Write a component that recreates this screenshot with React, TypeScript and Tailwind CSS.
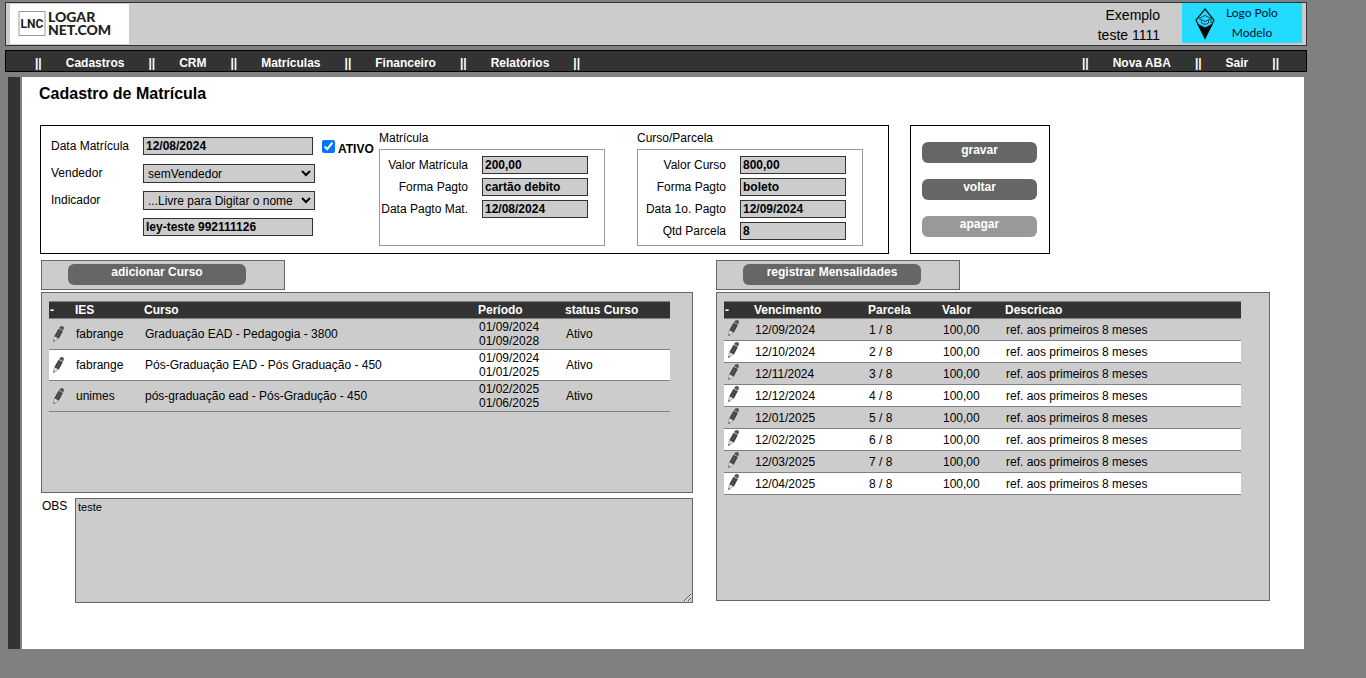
import { Fragment } from "react";

const LEFT_MENU = ["Cadastros", "CRM", "Matrículas", "Financeiro", "Relatórios"];
const RIGHT_MENU = ["Nova ABA", "Sair"];

const CURSOS = [
  {
    ies: "fabrange",
    curso: "Graduação EAD - Pedagogia - 3800",
    inicio: "01/09/2024",
    fim: "01/09/2028",
    status: "Ativo",
  },
  {
    ies: "fabrange",
    curso: "Pós-Graduação EAD - Pós Graduação - 450",
    inicio: "01/09/2024",
    fim: "01/01/2025",
    status: "Ativo",
  },
  {
    ies: "unimes",
    curso: "pós-graduação ead - Pós-Gradução - 450",
    inicio: "01/02/2025",
    fim: "01/06/2025",
    status: "Ativo",
  },
];

const VENCIMENTOS = [
  "12/09/2024",
  "12/10/2024",
  "12/11/2024",
  "12/12/2024",
  "12/01/2025",
  "12/02/2025",
  "12/03/2025",
  "12/04/2025",
];

const INPUT =
  "h-[18px] border border-[#333] bg-[#ccc] px-[2px] font-bold text-black outline-none";
const SELECT =
  "h-[19px] w-[172px] border border-[#333] bg-[#ccc] text-black outline-none";
const TH =
  "h-[18px] border-y border-[#808080] bg-[#333] p-0 pl-px text-left font-bold text-white";
const TD = "border-b border-[#808080] p-0 pl-[2px]";

function Pencil() {
  return (
    <svg width="11" height="16" viewBox="0 0 11 16" aria-hidden="true">
      <path d="M6.4 1.6 7.6.2 9.4 0 10.8 1v1.8L10 4.4 6.1 2.3z" fill="#555" />
      <path d="M5.5 2.7 9.9 5 5.8 12.8 1.2 10.2z" fill="#444" />
      <path d="M7 4.8 3.6 10.8" stroke="#777" strokeWidth=".5" />
      <path
        d="M1.3 10.6.6 15.4 4.9 12.8"
        fill="#e5e5e5"
        stroke="#888"
        strokeWidth=".7"
      />
      <path d="m.3 16 .3-2 1.5.9z" fill="#555" />
    </svg>
  );
}

function SiteLogo() {
  return (
    <svg width="119" height="40" viewBox="0 0 119 40" role="img" aria-label="Logar Net.com">
      <rect width="119" height="40" fill="#fff" />
      <rect x="9" y="7.5" width="26" height="24" fill="#fff" stroke="#999" />
      <text
        x="22"
        y="24"
        textAnchor="middle"
        fontSize="12"
        fontWeight="700"
        fill="#222"
        fontFamily="Roboto, sans-serif"
      >
        LNC
      </text>
      <g fontFamily="Lato, sans-serif" fontWeight="900" fontSize="14" fill="#222">
        <text x="38" y="18">LOGAR</text>
        <text x="38" y="31">NET.COM</text>
      </g>
    </svg>
  );
}

function PoloLogo() {
  return (
    <svg width="120" height="40" viewBox="0 0 120 40" role="img" aria-label="Logo Polo Modelo">
      <rect width="120" height="40" fill="#22dcff" />
      <path d="M23 6 32 17 23 35.5 14 17z" fill="none" stroke="#111" strokeWidth="1.2" />
      <path d="M15 20.5 23 24.5 31 20.5 23 35.5z" fill="#000" />
      <path
        d="M17 15.5 23 12.5 29.5 15.5 23 18.5zM19.5 17v3c2 1.6 5 1.6 7 0v-3M29 16v4"
        fill="none"
        stroke="#134"
        strokeWidth=".9"
      />
      <g fontFamily="Lato, sans-serif" fontSize="12" fill="#013" textAnchor="middle">
        <text x="70" y="14">Logo Polo</text>
        <text x="70" y="34">Modelo</text>
      </g>
    </svg>
  );
}

function Menu({ items }: { items: string[] }) {
  return (
    <div className="flex gap-6">
      <span>||</span>
      {items.map((item) => (
        <Fragment key={item}>
          <a href="#">{item}</a>
          <span>||</span>
        </Fragment>
      ))}
    </div>
  );
}

type Field = { id: string; label: string; value: string };

function PaymentGroup({ title, fields }: { title: string; fields: Field[] }) {
  return (
    <fieldset className="flex min-w-0 flex-col">
      <legend className="pt-1 pb-[3px] leading-4">{title}</legend>
      <div className="grow border border-[#999] pt-[6px] pr-4 pb-px">
        {fields.map((field) => (
          <div key={field.id} className="flex h-[22px] items-start">
            <label
              htmlFor={field.id}
              className="mr-[14px] w-[88px] text-right leading-[18px] whitespace-nowrap"
            >
              {field.label}
            </label>
            <input
              id={field.id}
              className={`${INPUT} w-[106px]`}
              defaultValue={field.value}
            />
          </div>
        ))}
      </div>
    </fieldset>
  );
}

function ToolbarButton({ children }: { children: string }) {
  return (
    <div className="mb-[2px] flex h-[30px] w-[244px] items-start border border-[#666] bg-[#ccc] pt-[3px] pl-[26px]">
      <button className="h-[21px] w-[178px] rounded-md bg-[#666] pb-[5px] leading-4 font-bold text-white">
        {children}
      </button>
    </div>
  );
}

export default function App() {
  return (
    <div className="min-h-screen bg-[#808080] pt-[2px] pr-[59px] pl-[5px] font-['Liberation_Sans',Arial,sans-serif] text-xs text-black">
      <header className="mb-1 flex h-11 items-start border border-[#333] bg-[#ccc] pr-1 pl-1">
        <div className="pt-px">
          <SiteLogo />
        </div>
        <div className="mr-[22px] ml-auto pt-[2px] text-right text-sm leading-5">
          <div>Exemplo</div>
          <div>teste 1111</div>
        </div>
        <PoloLogo />
      </header>

      <nav className="mb-[5px] flex h-[22px] items-center justify-between border border-black bg-[#333] pt-1 pr-[27px] pl-[29px] font-bold text-white">
        <Menu items={LEFT_MENU} />
        <Menu items={RIGHT_MENU} />
      </nav>

      <div className="mr-[3px] ml-[3px] flex gap-[2px]">
        <div className="w-3 shrink-0 bg-[#333]" />
        <main className="grow bg-white pt-[5px] pr-[34px] pb-[46px] pl-[17px]">
          <h1 className="mb-[19px] text-base leading-6 font-bold">
            Cadastro de Matrícula
          </h1>

          <form
            className="mb-[6px] ml-px flex gap-[21px]"
            onSubmit={(e) => e.preventDefault()}
          >
            <div className="flex border border-black pr-[25px] pb-[7px] pl-[10px]">
              <div className="grid w-[328px] auto-rows-[27px] grid-cols-[92px_1fr] items-start pt-[11px] leading-[18px]">
                <label htmlFor="data">Data Matrícula</label>
                <div className="flex">
                  <input
                    id="data"
                    className={`${INPUT} w-[170px]`}
                    defaultValue="12/08/2024"
                  />
                  <label className="ml-[9px] flex items-start gap-[3px] font-bold">
                    <input
                      type="checkbox"
                      className="mt-[3px] h-[13px] w-[13px]"
                      defaultChecked
                    />
                    <span className="pt-[3px]">ATIVO</span>
                  </label>
                </div>
                <label htmlFor="vendedor">Vendedor</label>
                <select id="vendedor" className={SELECT}>
                  <option>semVendedor</option>
                </select>
                <label htmlFor="indicador">Indicador</label>
                <select id="indicador" className={SELECT}>
                  <option>...Livre para Digitar o nome</option>
                </select>
                <input
                  aria-label="Nome do indicador"
                  className={`${INPUT} col-start-2 w-[170px]`}
                  defaultValue="ley-teste 992111126"
                />
              </div>
              <div className="flex gap-8">
                <PaymentGroup
                  title="Matrícula"
                  fields={[
                    { id: "valor-mat", label: "Valor Matrícula", value: "200,00" },
                    { id: "forma-mat", label: "Forma Pagto", value: "cartão debito" },
                    { id: "data-mat", label: "Data Pagto Mat.", value: "12/08/2024" },
                  ]}
                />
                <PaymentGroup
                  title="Curso/Parcela"
                  fields={[
                    { id: "valor-curso", label: "Valor Curso", value: "800,00" },
                    { id: "forma-curso", label: "Forma Pagto", value: "boleto" },
                    { id: "data-curso", label: "Data 1o. Pagto", value: "12/09/2024" },
                    { id: "qtd", label: "Qtd Parcela", value: "8" },
                  ]}
                />
              </div>
            </div>

            <div className="flex w-[140px] flex-col gap-4 border border-black pt-4 pr-3 pl-[11px] font-bold text-white">
              <button className="h-[21px] rounded-md bg-[#666] pb-[5px] leading-4">
                gravar
              </button>
              <button className="h-[21px] rounded-md bg-[#666] pb-[5px] leading-4">
                voltar
              </button>
              <button className="h-[21px] rounded-md bg-[#999] pb-[5px] leading-4">
                apagar
              </button>
            </div>
          </form>

          <div className="ml-[2px] grid grid-cols-[652fr_554fr] items-start gap-[23px]">
            <section>
              <ToolbarButton>adicionar Curso</ToolbarButton>
              <div className="mb-[5px] min-h-[201px] border border-[#666] bg-[#ccc] pt-2 pr-[22px] pl-[7px]">
                <table className="w-full table-fixed border-separate border-spacing-0 leading-[14px]">
                  <thead>
                    <tr>
                      <th className={`${TH} w-[25px]`}>-</th>
                      <th className={`${TH} w-[69px]`}>IES</th>
                      <th className={TH}>Curso</th>
                      <th className={`${TH} w-[87px]`}>Período</th>
                      <th className={`${TH} w-[106px]`}>status Curso</th>
                    </tr>
                  </thead>
                  <tbody>
                    {CURSOS.map((c, i) => (
                      <tr key={i} className="h-[31px] even:bg-white">
                        <td className={TD}>
                          <a href="#" aria-label="editar curso" className="block pb-px pl-[2px]">
                            <Pencil />
                          </a>
                        </td>
                        <td className={TD}>{c.ies}</td>
                        <td className={TD}>{c.curso}</td>
                        <td className={TD}>
                          {c.inicio}
                          <br />
                          {c.fim}
                        </td>
                        <td className={TD}>{c.status}</td>
                      </tr>
                    ))}
                  </tbody>
                </table>
              </div>
              <div className="flex items-start">
                <label htmlFor="obs" className="w-[34px] pl-px leading-4">
                  OBS
                </label>
                <textarea
                  id="obs"
                  className="h-[105px] grow border border-[#666] bg-[#ccc] p-[2px] text-[11px] leading-[13px] outline-none"
                  defaultValue="teste"
                />
              </div>
            </section>

            <section>
              <ToolbarButton>registrar Mensalidades</ToolbarButton>
              <div className="min-h-[309px] border border-[#666] bg-[#ccc] pt-2 pr-7 pl-[7px]">
                <table className="w-full table-fixed border-separate border-spacing-0 leading-[14px]">
                  <thead>
                    <tr>
                      <th className={`${TH} w-[29px]`}>-</th>
                      <th className={`${TH} w-[114px]`}>Vencimento</th>
                      <th className={`${TH} w-[74px]`}>Parcela</th>
                      <th className={`${TH} w-[63px]`}>Valor</th>
                      <th className={TH}>Descricao</th>
                    </tr>
                  </thead>
                  <tbody>
                    {VENCIMENTOS.map((data, i) => (
                      <tr key={data} className="h-[22px] even:bg-white">
                        <td className={TD}>
                          <a href="#" aria-label="editar parcela" className="block pb-[3px] pl-[2px]">
                            <Pencil />
                          </a>
                        </td>
                        <td className={TD}>{data}</td>
                        <td className={TD}>
                          {i + 1} / {VENCIMENTOS.length}
                        </td>
                        <td className={TD}>100,00</td>
                        <td className={TD}>ref. aos primeiros 8 meses</td>
                      </tr>
                    ))}
                  </tbody>
                </table>
              </div>
            </section>
          </div>
        </main>
      </div>
    </div>
  );
}
